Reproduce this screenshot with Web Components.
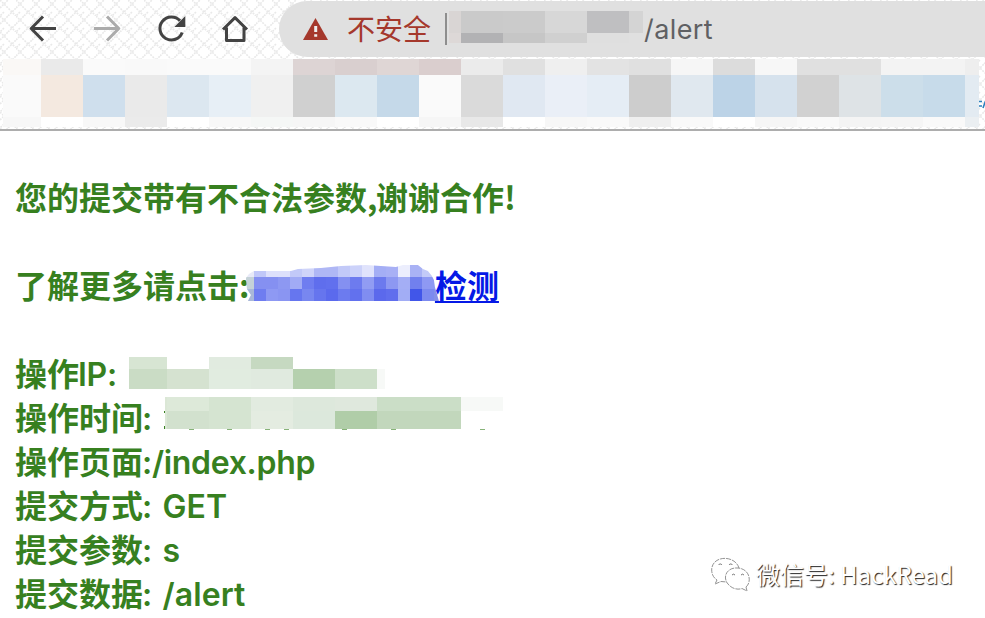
<!DOCTYPE html>
<html lang="zh"><head><meta charset="utf-8"><title>alert</title>
<style>html,body{margin:0;background:#fff;overflow:hidden}body{width:985px;height:618px}</style></head><body>
<browser-page></browser-page>
<script>
class BaseElement extends HTMLElement{
  constructor(){super();this.attachShadow({mode:'open'})}
}
/* Grid of flat tiles: cols / rows are track sizes, rows of colours are split by "|", "-" is an empty tile. */
customElements.define('pixel-mosaic',class extends BaseElement{
  connectedCallback(){
    const px=n=>this.getAttribute(n).split(' ').map(v=>v+'px').join(' ');
    const cells=this.getAttribute('colors').split('|').join(' ').trim().split(/\s+/);
    this.shadowRoot.innerHTML=`<style>:host{display:inline-grid;flex:none;grid-template-columns:${px('cols')};grid-template-rows:${px('rows')}}</style>`+
      cells.map(c=>`<i style="background:${c==='-'?'transparent':'#'+c}"></i>`).join('');
  }
});
customElements.define('nav-icon',class extends BaseElement{
  connectedCallback(){
    const shapes={
      back:'<path d="M28 14.500H3M15 2.500L3.200 14.500L15 26.500"/>',
      forward:'<path d="M2 14.500H27M15 2.500L26.800 14.500L15 26.500"/>',
      reload:'<path d="M26.200 18.500A11.500 11.500 0 1 1 24 6.800"/><path stroke="none" fill="currentColor" d="M29.300 2V13H18.300Z"/>',
      home:'<path d="M3 15.500L15 3.600L27 15.500M6.500 13.500V26.500H24V13.500"/>'
    };
    this.shadowRoot.innerHTML=`<style>:host{display:block;width:29px;height:29px;flex:none}svg{display:block;overflow:visible}</style>
    <svg width="29" height="29" fill="none" stroke="currentColor" stroke-width="3" stroke-linejoin="round">${shapes[this.getAttribute('name')]}</svg>`;
  }
});
customElements.define('address-bar',class extends BaseElement{
  connectedCallback(){this.shadowRoot.innerHTML=`<style>
    :host{display:flex;align-items:center;box-sizing:border-box;height:56px;flex:1;background:#e0e0e0;border-radius:28px 0 0 28px;padding-left:24px;font:28px/40px Roboto,"Noto Sans CJK SC",sans-serif}
    svg{flex:none;display:block}.warn{margin:-2px 0 0 19px;width:84px;color:#a5382c;font-family:"Noto Sans CJK SC",sans-serif;white-space:nowrap}
    .sep{width:2px;height:32px;background:#8e8e8e;margin:0 2px 0 14px}
    pixel-mosaic{margin-top:-4px}.url{color:#5f6063;margin:2px 0 0 1px;font-family:Inter,sans-serif;font-size:27px;letter-spacing:.4px}
    </style>
    <svg width="25" height="22"><path d="M12.500 0L25 22H0Z" fill="#a5382c"/><path d="M11.200 8h3v6h-3zM11.200 16.200h3v2.600h-3z" fill="#eee"/></svg>
    <span class="warn">不安全</span><span class="sep"></span>
    <pixel-mosaic cols="12 42 42 42 42 14" rows="22 10" colors="d9d5d4 cacaca cbcbcb d7d7d7 bfbfc1 d4d4d4|ddd8d7 b2b2b4 c6c6c6 d0d0d0 dfdfdf -"></pixel-mosaic><span class="url">/alert</span>`}
});
customElements.define('browser-toolbar',class extends BaseElement{
  connectedCallback(){this.shadowRoot.innerHTML=`<style>
    :host{display:block;box-sizing:border-box;height:131px;border-bottom:2px solid #adadad;padding-top:1px;overflow:hidden;
    background:url("data:image/svg+xml,%3Csvg xmlns='http://www.w3.org/2000/svg' width='16' height='16'%3E%3Cpath d='M0 0L16 16M0 8L8 0M8 16L16 8M4 12L0 16' fill='none' stroke='%23e9e9e9' stroke-width='1.600' stroke-dasharray='2 1'/%3E%3C/svg%3E") #fff}
    .nav{display:flex;height:56px;align-items:center}.icons{display:flex;gap:35px;width:251px;padding-left:28px;margin-top:-1px;color:#434343}
    .off{color:#ababab}.bookmarks{display:flex;margin:2px 0 0 3px;align-items:flex-start}
    </style>
    <div class="nav"><div class="icons"><nav-icon name="back"></nav-icon><nav-icon class="off" name="forward"></nav-icon><nav-icon name="reload"></nav-icon><nav-icon name="home"></nav-icon></div><address-bar></address-bar></div>
    <div class="bookmarks"><pixel-mosaic cols="38 42 42 42 42 42 42 42 42 42 42 42 42 42 42 42 42 42 42 42 42 42 42 14" rows="16 42 10" colors="faf8f6 eaeaea fafafa f9f9f9 fafafa fafafa f4f4f4 ddd4d4 d9cfcf dfd6d5 dacece ebebeb e0e0e0 efefef e3e3e3 e0e0e0 f6f6f6 dcdcdc f7f7f7 e0e0e0 e0e0e0 f3f3f3 f3f3f3 eeeeee|fafafa f4e9e0 cfdfed eaeaea dce7f0 e7eff6 f0f0f0 d0d0d0 dce8f0 c5d9e9 fafafa dadada e0e8f2 eaeff7 e5edf5 cdcdcd e0e8ef bcd3e7 d6e2ed d1d1d1 dee3e6 ccdeea c7dbea e3ebf2|f7f7f7 ffffff f8f8f8 ebebeb ffffff f8f8f8 f5f7f6 f6f6f6 f9f9f9 ffffff f6f6f6 e8e8e8 ffffff f7f7f7 f9f9f9 efefef f9f9f9 ffffff f6f6f6 f9f9f9 f4f4f4 f5f5f5 f9f9f9 ebeff2"></pixel-mosaic>
    <svg width="6" height="10" style="margin-top:41px" stroke="#2b80bd" stroke-width="1.600"><path d="M0 1.500H3M0 6H3M4 8L6.500 1"/></svg></div>`}
});
customElements.define('report-line',class extends BaseElement{
  connectedCallback(){this.shadowRoot.innerHTML=`<style>:host{display:flex;height:44px;line-height:44px;white-space:pre;align-items:flex-start}</style><slot></slot>`}
});
customElements.define('wechat-mark',class extends BaseElement{
  connectedCallback(){this.shadowRoot.innerHTML=`<style>
    :host{display:flex;align-items:center;gap:6px;font:24px/34px "Noto Sans CJK SC",sans-serif;color:#fff;white-space:pre;text-shadow:1px 1px 1px #222}
    svg{display:block}span{margin-top:-2px}</style>
    <svg width="39" height="35" fill="#fff" stroke="#777" stroke-width=".8"><g stroke-dasharray="5 1"><path d="M28 11C24-2 2-2 .7 12C.5 18 3 21 6 23L4 27L10 24.500L16 25"/><path d="M35 30C41 25 39 12 27 11C16 10 11 20 17 27C21 32 27 33 31 31.500L36 34Z"/></g><path stroke="#555" d="M7.500 8a2 2 0 0 1 3.500 0M18 8a2 2 0 0 1 3.500 0M21 18a2 2 0 0 1 3 0M30 18a2 2 0 0 1 3 0"/></svg><span>微信号: HackRead</span>`}
});
customElements.define('browser-page',class extends BaseElement{
  connectedCallback(){this.shadowRoot.innerHTML=`<style>
    :host{display:block;position:relative;height:618px;overflow:hidden;background:#fff;color:#37801f;font:600 32px/44px Inter,"Noto Sans CJK SC",sans-serif}
    main{padding:45px 15px 0}.gap{margin-bottom:44px}
    .cn{font-family:"Noto Sans CJK SC",sans-serif;font-weight:700;margin-top:-2px}
    .tight{letter-spacing:-1.500px}
    .en{font-weight:600;letter-spacing:-.3px;margin:1px 0 0 -1px}
    .wide{word-spacing:2px;letter-spacing:.1px}
    .link{margin:1px 0 0 -2px;width:189px;clip-path:polygon(0 13px,3px 9px,8px 6px,45px 6px,52px 4px,75px 3px,95px 1px,120px 0,150px 2px,157px 0,172px 0,177px 4px,182px 6px,186px 11px,188px 15px,189px 22px,193px 36px,2px 36px,5px 30px,1px 24px)}
    a{color:#0519e6;text-decoration:underline;text-decoration-thickness:2px;text-underline-offset:3px}
    .ip{margin:5px 0 0 12px}.time{margin:1px 0 0 13px}
    .rest{position:absolute;left:163px;top:409px}
    wechat-mark{position:absolute;left:711px;top:557px}
    </style>
    <browser-toolbar></browser-toolbar><main>
    <report-line class="gap"><span class="cn">您的提交带有不合法参数<span class="tight">,</span>谢谢合作!</span></report-line>
    <report-line class="gap"><span class="cn">了解更多请点击<span class="tight">:</span></span><pixel-mosaic class="link" cols="8 12 12 12 12 12 12 12 12 12 12 12 12 12 12 12 6" rows="12 12 12" colors="e8eaf8 c0c7f8 dde0fb dde0fb c2c9f8 cfd4f9 afb7f5 afb7f5 c2c9f8 ccd2fa e0e3fc a4aef5 a8b0f5 eceefd a9b2f5 c3caf8 -|c5d2d8 8590f1 8590f1 8d98f2 a1abf5 6f7df0 5f6eed 6170ee 8490f1 6d7bef 919cf3 6c7aee 8d98f2 a4aef5 7180ee 8e99f3 8e99f3|a9b8d8 6f7df0 8e99f3 8a95f2 6676ef 7887f0 6675ee 5b6aed 6c7bef 6271ee 808df1 5b69ec 606eed a2adf5 4156e9 7c8aef 8590e8"></pixel-mosaic><a class="cn" href="#">检测</a></report-line>
    <report-line><span class="cn">操作</span><span class="en">IP:</span><pixel-mosaic class="ip" cols="38 42 42 42 42 42 8" rows="12 20" colors="d7e5d3 - e1ebe0 c6d9c1 - - -|cadcc5 d5e2d0 e1ece0 e0eadf b5d0ae cddfc9 f7f9f7"></pixel-mosaic></report-line>
    <report-line><span class="cn">操作时间</span><span class="en">:</span><pixel-mosaic class="time" cols="2 42 42 42 42 42 84 42" rows="14 18" colors="dbe7d6 dde9d9 d5e4d1 e2ebe0 dde8dc dfe8dd cbdec7 f7f9f7|dbe7d6 d2e1ce d5e4d1 e4ece1 dce8dc b0cda8 c2d7bc -"></pixel-mosaic></report-line>
    <report-line><span class="cn">操作页面</span><span class="en">:/index.php</span></report-line>
    <report-line><span class="cn">提交方式</span><span class="en wide">: GET</span></report-line>
    <report-line><span class="cn">提交参数</span><span class="en wide">: s</span></report-line>
    <report-line><span class="cn">提交数据</span><span class="en wide">: /alert</span></report-line>
    </main>
    <svg class="rest" width="330" height="22" fill="#37801f"><path d="M1 2h1v2h-1zM1 17h1v3h-1z"/><path opacity=".6" d="M26 20h5v1h-5zM64 20h5v1h-5zM102 20h5v1h-5zM121 20h5v1h-5zM179 20h5v1h-5zM228 20h5v1h-5zM317 20h5v1h-5z"/></svg>
    <wechat-mark></wechat-mark>`}
});
</script></body></html>
